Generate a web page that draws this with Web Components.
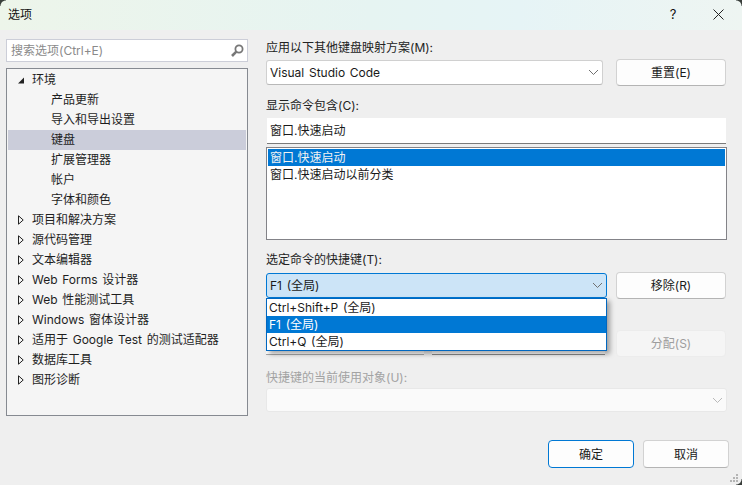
<!DOCTYPE html>
<html lang="zh-CN"><head><meta charset="utf-8">
<style>
html,body{margin:0;padding:0;width:742px;height:485px;overflow:hidden;background:#efefef}
body{font:12px/17px Inter,"Noto Sans CJK SC",sans-serif;word-spacing:1.3px;color:#1a1a1a}
</style></head><body>
<x-dialog>
  <x-titlebar slot="title" label="选项"></x-titlebar>
  <x-pane slot="left">
    <x-search placeholder="搜索选项(Ctrl+E)"></x-search>
    <x-tree>
      <x-node kind="open">环境</x-node>
      <x-node kind="child">产品更新</x-node>
      <x-node kind="child">导入和导出设置</x-node>
      <x-node kind="child" selected>键盘</x-node>
      <x-node kind="child">扩展管理器</x-node>
      <x-node kind="child">帐户</x-node>
      <x-node kind="child">字体和颜色</x-node>
      <x-node kind="closed">项目和解决方案</x-node>
      <x-node kind="closed">源代码管理</x-node>
      <x-node kind="closed">文本编辑器</x-node>
      <x-node kind="closed">Web Forms 设计器</x-node>
      <x-node kind="closed">Web 性能测试工具</x-node>
      <x-node kind="closed">Windows 窗体设计器</x-node>
      <x-node kind="closed">适用于 Google Test 的测试适配器</x-node>
      <x-node kind="closed">数据库工具</x-node>
      <x-node kind="closed">图形诊断</x-node>
    </x-tree>
  </x-pane>
  <x-form slot="right"></x-form>
  <x-footer slot="footer"></x-footer>
</x-dialog>
<script>
const chev=(c)=>`<svg width="11" height="7" viewBox="0 0 11 7" fill="none"><path d="M1 1l4.5 4.5L10 1" stroke="${c}" stroke-width="1"/></svg>`;
function def(name,html){
  customElements.define(name,class extends HTMLElement{
    connectedCallback(){
      if(this.shadowRoot)return;
      const r=this.attachShadow({mode:'open'});
      r.innerHTML=typeof html==='function'?html(this):html;
    }
  });
}
def('x-dialog',`<style>
:host{display:grid;width:742px;height:485px;grid-template-rows:30px 1fr;grid-template-columns:266px 1fr;position:relative;background:#efefef;overflow:hidden}
.t{grid-column:1/3}
.f{position:absolute;right:13px;bottom:17px}
.c{position:absolute;width:6px;height:6px}
.c.l{left:0;top:0;background:radial-gradient(circle at 100% 100%,transparent 5px,#3a3f3c 6px)}
.c.r{right:0;top:0;background:radial-gradient(circle at 0 100%,transparent 5px,#3a3f3c 6px)}
.c.b{right:0;bottom:0;background:radial-gradient(circle at 0 0,transparent 5px,#3a3f3c 6px)}
.grip{position:absolute;right:3px;bottom:2px}
</style><div class="t"><slot name="title"></slot></div><div><slot name="left"></slot></div><div><slot name="right"></slot></div><div class="f"><slot name="footer"></slot></div>
<div class="c l"></div><div class="c r"></div><div class="c b"></div>
<svg class="grip" width="10" height="10" viewBox="0 0 10 10" fill="#b4b4b4"><rect x="7" y="1" width="2" height="2"/><rect x="4" y="4" width="2" height="2"/><rect x="7" y="4" width="2" height="2"/><rect x="1" y="7" width="2" height="2"/><rect x="4" y="7" width="2" height="2"/><rect x="7" y="7" width="2" height="2"/></svg>`);
def('x-titlebar',el=>`<style>
:host{display:flex;align-items:center;box-sizing:border-box;height:30px;padding:0 18px 2px 8px;background:linear-gradient(90deg,#edf5ea 0%,#e6f4f2 50%,#e6f4f6 70%,#eef5f2 100%);color:#111}
.s{flex:1}.q{width:20px;text-align:center;margin-right:30px;font-size:13px}
svg{display:block}
</style><span>${el.getAttribute('label')}</span><span class="s"></span><span class="q">?</span><svg width="11" height="11" viewBox="0 0 11 11" fill="none" stroke="#222"><path d="M.5.5l10 10M10.500.5l-10 10"/></svg>`);
def('x-pane',`<style>:host{display:flex;flex-direction:column;gap:6px;padding:9px 18px 0 6px}</style><slot></slot>`);
def('x-search',el=>`<style>
:host{display:flex;align-items:center;height:23px;box-sizing:border-box;border:1px solid #ccced8;background:#fff;padding:0 3px 0 4px;color:#8a8a8a}
span{flex:1}
</style><span>${el.getAttribute('placeholder')}</span><svg width="14" height="14" viewBox="0 0 14 14" fill="none"><circle cx="9" cy="5" r="3.600" stroke="#777" stroke-width="1.800"/><path d="M6.300 7.700L2 12" stroke="#777" stroke-width="2.600"/></svg>`);
def('x-tree',`<style>:host{display:block;height:348px;box-sizing:border-box;border:1px solid #868a91;background:#f5f5f5;padding:1px}</style><slot></slot>`);
def('x-node',el=>{
  const k=el.getAttribute('kind'),sel=el.hasAttribute('selected');
  const arrow=k==='open'?`<svg width="7" height="7" viewBox="0 0 7 7"><path d="M0 6.500L6 .5v6z" fill="#222"/></svg>`:k==='closed'?`<svg width="6" height="10" viewBox="0 0 6 10" fill="none"><path d="M.5 .8L5.200 5 .5 9.200z" stroke="#222"/></svg>`:'';
  return `<style>
:host{display:flex;align-items:center;box-sizing:border-box;height:20px;padding-bottom:2px;color:#1e1e1e;${sel?'background:#cbcdda;':''}padding-left:${k==='child'?43:10}px}
.a{width:14px;display:flex;align-items:center;position:relative;top:1px}
span{white-space:pre}
</style>${arrow?`<div class="a">${arrow}</div>`:''}<span><slot></slot></span>`;
});
def('x-combo',el=>{
  const v=el.getAttribute('state')||'';
  return `<style>
:host{display:flex;align-items:center;box-sizing:border-box;height:25px;padding:0 3px 0 3px;background:#fff;border:1px solid #d0d0d0;border-bottom-color:#b8b8b8;border-radius:3px;color:#1a1a1a}
:host([state=focus]){background:#cce4f7;border-color:#0078d4}
:host([state=off]){background:#fafafa;border-color:#e8e8e8;height:24px}
span{flex:1}
</style><span><slot></slot></span>${chev(v==='off'?'#b9b9b9':'#707070')}`;
});
def('x-btn',`<style>
:host{display:flex;align-items:center;justify-content:center;box-sizing:border-box;width:110px;height:27px;background:#fdfdfd;border:1px solid #d2d2d2;border-bottom-color:#b4b4b4;border-radius:4px;color:#1a1a1a}
:host([disabled]){background:#f5f5f5;border-color:#ececec;color:#9d9d9d}
:host([primary]){border:1.500px solid #0078d4}
</style><slot></slot>`);
def('x-menu',`<style>
:host{display:block;position:absolute;left:0;top:25px;width:341px;box-sizing:border-box;height:53px;background:#fff;border:1px solid #0067c0;box-shadow:3px 3px 5px rgba(0,0,0,.35);z-index:2}
</style><slot></slot>`);
def('x-opt',`<style>:host{display:block;height:17px;padding-left:2px;color:#1a1a1a}
:host([on]){background:#0078d4;color:#fff}</style><slot></slot>`);
def('x-form',`<style>
:host{display:block;width:461px;padding-top:9px}
.l{height:17px;display:block;color:#222}
.row{display:flex;justify-content:space-between;align-items:flex-start;height:27px;width:460px}
.in{box-sizing:border-box;height:26px;margin:4px 0 0 1px;width:459px;padding:0 3px;display:flex;align-items:center;background:#fff;border-bottom:1px solid #7b7b7b;color:#1a1a1a}
.ls{box-sizing:border-box;height:93px;margin-top:3px;border:1px solid #838388;background:#fff;padding:1px}
.ls div{height:17px;padding-left:2px;color:#1a1a1a}
.ls .on{background:#0078d4;color:#f2f2f2}
.w{position:relative;width:341px;margin-top:1px}
.w x-combo{width:341px}
.fields{display:flex;gap:8px;height:25px;width:339px}
.fields i{display:block;background:#fff;box-sizing:border-box}
.dis{color:#a3a3a3}
</style>
<span class="l">应用以下其他键盘映射方案(M):</span>
<div class="row" style="margin-top:3px"><x-combo style="width:337px;margin-top:1px">Visual Studio Code</x-combo><x-btn>重置(E)</x-btn></div>
<span class="l" style="margin-top:11px">显示命令包含(C):</span>
<div class="in">窗口.快速启动</div>
<div class="ls"><div class="on">窗口.快速启动</div><div>窗口.快速启动以前分类</div></div>
<span class="l" style="margin-top:11px">选定命令的快捷键(T):</span>
<div class="row" style="margin-top:4px"><div class="w"><x-combo state="focus">F1 (全局)</x-combo><x-menu><x-opt>Ctrl+Shift+P (全局)</x-opt><x-opt on>F1 (全局)</x-opt><x-opt>Ctrl+Q (全局)</x-opt></x-menu></div><x-btn>移除(R)</x-btn></div>
<div class="row" style="margin-top:31px"><div class="fields"><i style="width:158px;border-bottom:1px solid #a8a8a8"></i><i style="width:173px;border-bottom:1px solid #8a8a8a"></i></div><x-btn disabled>分配(S)</x-btn></div>
<span class="l dis" style="margin-top:12px">快捷键的当前使用对象(U):</span>
<x-combo state="off" style="margin-top:2px;width:461px"></x-combo>
`);
def('x-footer',`<style>:host{display:flex;gap:9px}x-btn{width:86px;height:28px}</style><x-btn primary>确定</x-btn><x-btn>取消</x-btn>`);
</script>
</body></html>
